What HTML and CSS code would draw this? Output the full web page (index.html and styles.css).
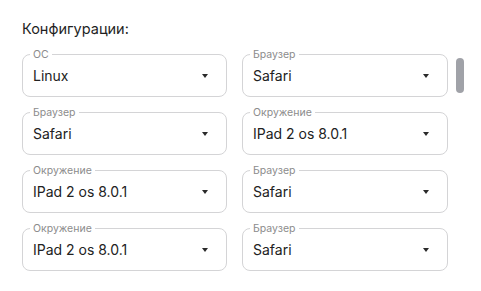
FILE: index.html
```html
<!DOCTYPE html>
<html lang="ru">
<head>
  <meta charset="UTF-8">
  <meta name="viewport" content="width=device-width, initial-scale=1.0">
  <title>Конфигурации</title>
  <link rel="stylesheet" href="styles.css">
</head>
<body>
  <div class="panel">
    <h2 class="title">Конфигурации:</h2>

    <div class="configs">
      <div class="field">
        <span class="field-label">ОС</span>
        <span class="field-value">Linux</span>
        <span class="caret"></span>
      </div>
      <div class="field">
        <span class="field-label">Браузер</span>
        <span class="field-value">Safari</span>
        <span class="caret"></span>
      </div>

      <div class="field">
        <span class="field-label">Браузер</span>
        <span class="field-value">Safari</span>
        <span class="caret"></span>
      </div>
      <div class="field">
        <span class="field-label">Окружение</span>
        <span class="field-value">IPad 2 os 8.0.1</span>
        <span class="caret"></span>
      </div>

      <div class="field">
        <span class="field-label">Окружение</span>
        <span class="field-value">IPad 2 os 8.0.1</span>
        <span class="caret"></span>
      </div>
      <div class="field">
        <span class="field-label">Браузер</span>
        <span class="field-value">Safari</span>
        <span class="caret"></span>
      </div>

      <div class="field">
        <span class="field-label">Окружение</span>
        <span class="field-value">IPad 2 os 8.0.1</span>
        <span class="caret"></span>
      </div>
      <div class="field">
        <span class="field-label">Браузер</span>
        <span class="field-value">Safari</span>
        <span class="caret"></span>
      </div>
    </div>

    <!-- scroll thumb of the list -->
    <div class="scroll-thumb"></div>
  </div>
</body>
</html>
```

FILE: styles.css
```css
* {
  box-sizing: border-box;
}
body {
  margin: 0;
  background: #ffffff;
  font-family: Inter, "Noto Sans", Arial, sans-serif;
  color: #222222;
}
.panel {
  position: relative;
  padding: 19px 22px 0 22px;
}
.title {
  margin: 0 0 15px 0;
  font-size: 14.5px;
  line-height: 20px;
  font-weight: 400;
  color: #1f1f1f;
}
.configs {
  display: grid;
  grid-template-columns: 205px 206px;
  column-gap: 15px;
  row-gap: 15px;
}
.field {
  position: relative;
  display: flex;
  align-items: center;
  height: 43px;
  padding: 0 18px 0 10px;
  border: 1px solid #d4d4d6;
  border-radius: 8px;
}
.field-label {
  position: absolute;
  top: -7px;
  left: 7px;
  padding: 0 3px;
  background: #ffffff;
  font-size: 10.5px;
  line-height: 13px;
  color: #8c8c8c;
}
.field-value {
  font-size: 14px;
  line-height: 20px;
  color: #222222;
}
.caret {
  margin-left: auto;
  width: 0;
  height: 0;
  border-left: 3.5px solid transparent;
  border-right: 3.5px solid transparent;
  border-top: 4px solid #2a2a2a;
}
.scroll-thumb {
  position: absolute;
  top: 58px;
  left: 456px;
  width: 8px;
  height: 35px;
  border-radius: 4px;
  background: #a0a2a8;
}
```
